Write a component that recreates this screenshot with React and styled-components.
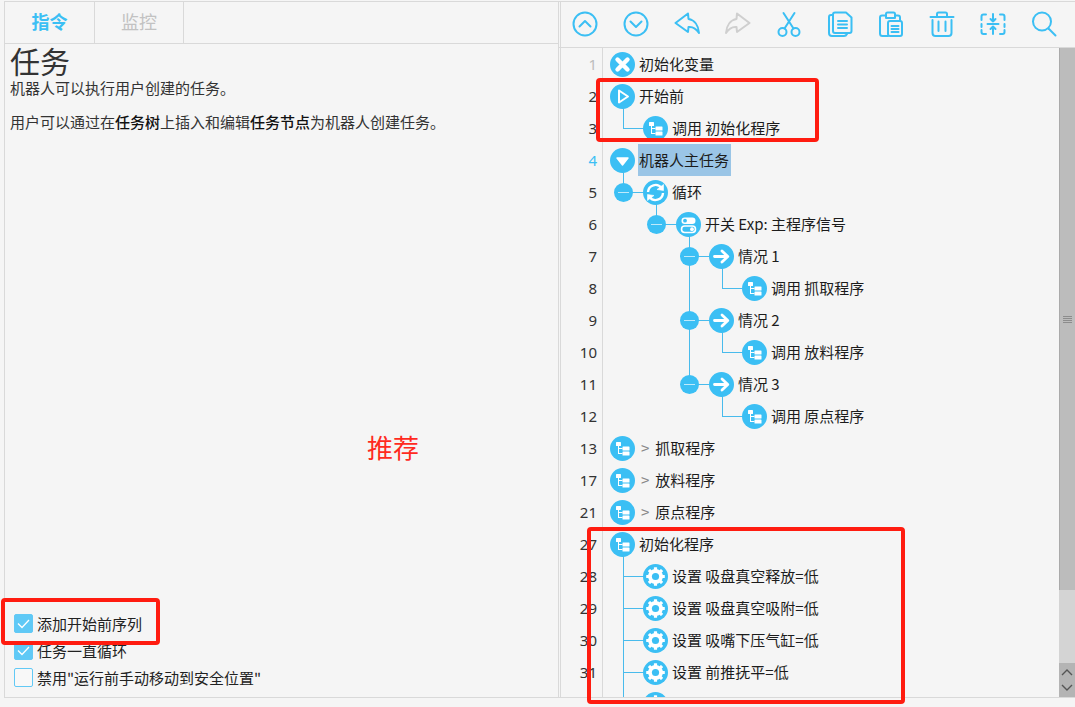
import styled, { createGlobalStyle } from "styled-components";

const BLUE = "#3bbff4";
const LINE = "#48bbec";
const FONT = `"Noto Sans CJK SC", "Noto Sans", sans-serif`;

const GlobalStyle = createGlobalStyle`
  html, body {
    margin: 0;
    background: #f5f5f5;
  }
  * {
    box-sizing: border-box;
  }
`;

const Page = styled.div`
  position: relative;
  width: 1075px;
  height: 707px;
  overflow: hidden;
  display: flex;
  flex-direction: column;
  padding-top: 1px;
  background: #f5f5f5;
  color: #262626;
  font-family: ${FONT};
`;

const Main = styled.div`
  flex: 0 0 697px;
  display: flex;
  border-top: 1px solid #d9d9d9;
  border-bottom: 1px solid #d9d9d9;
  margin-left: 4px;
  min-height: 0;
`;

const Footer = styled.div`
  flex: 1;
  overflow: hidden;
  padding: 5px 0 0 625px;
  color: ${BLUE};
  font-size: 14px;
  line-height: 20px;
  white-space: nowrap;
`;

/* left panel */
const LeftPanel = styled.section`
  position: relative;
  flex: 0 0 555px;
  display: flex;
  flex-direction: column;
  border-left: 1px solid #d9d9d9;
  border-right: 1px solid #d9d9d9;
`;

const Tabs = styled.div`
  flex: 0 0 42px;
  display: flex;
  border-bottom: 1px solid #d9d9d9;
`;

const Tab = styled.div`
  flex: 0 0 ${(props) => props.width}px;
  display: flex;
  align-items: center;
  justify-content: center;
  padding-bottom: 3px;
  border-right: 1px solid #d9d9d9;
  font-size: 18px;
  font-weight: ${(props) => (props.active ? 700 : 400)};
  color: ${(props) => (props.active ? BLUE : "#c2c2c2")};
`;

const Help = styled.div`
  flex: 1;
  padding: 0 0 0 5px;
`;

const Title = styled.h1`
  margin: 0 0 2px;
  font-size: 30px;
  font-weight: 400;
  line-height: 32px;
  color: #333;
`;

const Para = styled.p`
  margin: 0 0 14px;
  font-size: 15px;
  line-height: 20px;
  color: #333;

  b {
    font-weight: 500;
    color: #111;
  }
`;

const Recommend = styled.div`
  position: absolute;
  left: 362px;
  top: 427px;
  font-size: 26px;
  line-height: 36px;
  color: #ff2a1e;
`;

const Options = styled.div`
  display: flex;
  flex-direction: column;
  padding: 0 0 6px 9px;
`;

const Option = styled.label`
  height: 27px;
  display: flex;
  align-items: center;
  gap: 4px;
  font-size: 15px;
  color: #222;
`;

const Box = styled.span`
  flex: 0 0 19px;
  height: 19px;
  display: flex;
  align-items: center;
  justify-content: center;
  border: 1px solid #62c9f5;
  border-radius: 2px;
  background: ${(props) => (props.checked ? "#5fc9f6" : "#f8f8f8")};
`;

/* right panel */
const RightPanel = styled.section`
  flex: 1;
  display: flex;
  flex-direction: column;
  min-width: 0;
  margin-left: 1px;
  border-left: 1px solid #d9d9d9;
`;

const Toolbar = styled.div`
  flex: 0 0 46px;
  display: flex;
  align-items: center;
  margin-left: -2px;
  padding-bottom: 2px;
  border-bottom: 1px solid #d9d9d9;
`;

const ToolButton = styled.div`
  flex: 0 0 51px;
  display: flex;
  justify-content: center;
  color: ${(props) => (props.disabled ? "#cfcfcf" : BLUE)};

  svg {
    display: block;
    fill: none;
    stroke: currentColor;
    stroke-width: 2;
    stroke-linecap: round;
    stroke-linejoin: round;
  }
`;

const Editor = styled.div`
  flex: 1;
  display: flex;
  min-height: 0;
`;

const Tree = styled.div`
  flex: 1;
  overflow: hidden;
  min-width: 0;
`;

const Row = styled.div`
  height: 32px;
  display: flex;
`;

const LineNo = styled.div`
  flex: 0 0 42px;
  padding-right: 5px;
  border-right: 1px solid #d9d9d9;
  text-align: right;
  font-family: "Noto Sans", sans-serif;
  font-size: 15px;
  line-height: 32px;
  color: ${(props) => props.color || "#333"};
`;

const Node = styled.div`
  position: relative;
  flex: 1;
  display: flex;
  align-items: center;
  gap: 4px;
  padding-left: ${(props) => 7 + props.level * 33}px;
  font-size: 15px;
  color: #1c1c1c;
  white-space: nowrap;
`;

const NodeIcon = styled.svg`
  position: relative;
  flex: 0 0 25px;
  height: 25px;
`;

const Label = styled.span`
  line-height: 32px;
  background: ${(props) => (props.selected ? "#9ac5e6" : "transparent")};
  padding: 0 ${(props) => (props.selected ? "2px 0 1px" : "0")};
  margin-left: ${(props) => (props.selected ? "-1px" : "0")};
`;

const Fold = styled.span`
  margin: 0 6px 0 2px;
  color: #888;
`;

/* vertical part of a connector, hangs down from the row above */
const Pipe = styled.i`
  position: absolute;
  left: ${(props) => 20 + props.axis * 33}px;
  top: -4px;
  bottom: ${(props) => (props.through ? "0" : "50%")};
  width: 1px;
  background: ${LINE};
`;

/* horizontal part of a connector, from a pipe to the icon */
const Branch = styled.i`
  position: absolute;
  left: ${(props) => 20 + props.axis * 33}px;
  top: 50%;
  width: 21px;
  height: 1px;
  background: ${LINE};
`;

const Toggle = styled.i`
  position: absolute;
  left: ${(props) => 11 + props.axis * 33}px;
  top: 7px;
  width: 19px;
  height: 19px;
  border-radius: 50%;
  background: ${BLUE};

  &::after {
    content: "";
    position: absolute;
    left: 4px;
    right: 4px;
    top: 9px;
    height: 1px;
    background: #bfeafb;
  }
`;

const Scrollbar = styled.div`
  flex: 0 0 16px;
  display: flex;
  flex-direction: column;
  background: #d4d4d4;
`;

const Thumb = styled.div`
  flex: 0 0 542px;
  display: flex;
  flex-direction: column;
  justify-content: center;
  align-items: center;
  gap: 1px;
  background: #bcbcbc;
  border-left: 1px solid #aaa;

  i {
    width: 9px;
    height: 1px;
    background: #8c8c8c;
  }
`;

const ScrollArrows = styled.div`
  margin-top: auto;
  flex: 0 0 34px;
  background: #b4b4b4;

  svg {
    display: block;
    fill: none;
    stroke: #555;
    stroke-width: 1.4;
  }
`;

/* red annotations drawn over the screenshot */
const Mark = styled.div`
  position: absolute;
  left: ${(props) => props.x}px;
  top: ${(props) => props.y}px;
  width: ${(props) => props.w}px;
  height: ${(props) => props.h}px;
  border: 4px solid #ff1c10;
  border-radius: 4px;
`;

const glyphs = {
  stop: (
    <path d="M7.5 7.5 L17.5 17.5 M17.5 7.5 L7.5 17.5" stroke="#fff" strokeWidth="4.4" strokeLinecap="round" />
  ),
  start: (
    <path d="M9 6.5 L18 12.5 L9 18.5 Z" fill="none" stroke="#fff" strokeWidth="2" strokeLinejoin="round" />
  ),
  tree: (
    <g fill="#fff">
      <rect x="6" y="6" width="5" height="4" rx="0.6" />
      <rect x="12.5" y="10.5" width="7" height="4" rx="0.6" />
      <rect x="12.5" y="15.5" width="7" height="4" rx="0.6" />
      <path d="M8 10 h1 v2 h3.5 v1 h-3.5 v4 h3.5 v1 h-4.5 Z" />
    </g>
  ),
  open: <path d="M7 10 H18 L12.5 17 Z" fill="#fff" stroke="#fff" strokeWidth="1.4" strokeLinejoin="round" />,
  loop: (
    <g fill="none" stroke="#fff" strokeWidth="2.4">
      <path d="M5 12 A7.5 7.5 0 0 1 18.5 8" />
      <path d="M20 13 A7.5 7.5 0 0 1 6.5 17" />
      <path d="M14 9.5 L20.5 10.5 L20.5 4.5 Z" fill="#fff" strokeWidth="0.6" />
      <path d="M11 15.5 L4.5 14.5 L4.5 20.5 Z" fill="#fff" strokeWidth="0.6" />
    </g>
  ),
  switch: (
    <g>
      <rect x="5.5" y="5.5" width="14" height="6.5" rx="3.2" fill="#fff" />
      <circle cx="9" cy="8.7" r="1.9" fill={BLUE} />
      <rect x="5.5" y="14" width="14" height="6.5" rx="3.2" fill="none" stroke="#fff" strokeWidth="1.6" />
      <circle cx="16" cy="17.2" r="1.9" fill="#fff" />
    </g>
  ),
  arrow: (
    <path
      d="M5.5 12.5 H18.5 M13 7 L18.8 12.5 L13 18"
      fill="none"
      stroke="#fff"
      strokeWidth="2.8"
      strokeLinecap="round"
      strokeLinejoin="round"
    />
  ),
  gear: (
    <g>
      <circle cx="12.5" cy="12.5" r="7.4" fill="#fff" />
      {[0, 45, 90, 135, 180, 225, 270, 315].map((deg) => (
        <rect key={deg} x="10.9" y="3.2" width="3.2" height="4" rx="0.5" fill="#fff" transform={`rotate(${deg} 12.5 12.5)`} />
      ))}
      <circle cx="12.5" cy="12.5" r="3.6" fill={BLUE} />
    </g>
  ),
};

const rows = [
  { n: 1, level: 0, icon: "stop", text: "初始化变量", color: "#bdbdbd" },
  { n: 2, level: 0, icon: "start", text: "开始前" },
  { n: 3, level: 1, icon: "tree", text: "调用 初始化程序", elbow: 0 },
  { n: 4, level: 0, icon: "open", text: "机器人主任务", color: BLUE, selected: true },
  { n: 5, level: 1, icon: "loop", text: "循环", toggle: 0 },
  { n: 6, level: 2, icon: "switch", text: "开关 Exp: 主程序信号", toggle: 1 },
  { n: 7, level: 3, icon: "arrow", text: "情况 1", toggle: 2, through: 2 },
  { n: 8, level: 4, icon: "tree", text: "调用 抓取程序", elbow: 3, through: 2 },
  { n: 9, level: 3, icon: "arrow", text: "情况 2", toggle: 2, through: 2 },
  { n: 10, level: 4, icon: "tree", text: "调用 放料程序", elbow: 3, through: 2 },
  { n: 11, level: 3, icon: "arrow", text: "情况 3", toggle: 2 },
  { n: 12, level: 4, icon: "tree", text: "调用 原点程序", elbow: 3 },
  { n: 13, level: 0, icon: "tree", text: "抓取程序", folded: true },
  { n: 17, level: 0, icon: "tree", text: "放料程序", folded: true },
  { n: 21, level: 0, icon: "tree", text: "原点程序", folded: true },
  { n: 27, level: 0, icon: "tree", text: "初始化程序" },
  { n: 28, level: 1, icon: "gear", text: "设置 吸盘真空释放=低", elbow: 0, through: 0 },
  { n: 29, level: 1, icon: "gear", text: "设置 吸盘真空吸附=低", elbow: 0, through: 0 },
  { n: 30, level: 1, icon: "gear", text: "设置 吸嘴下压气缸=低", elbow: 0, through: 0 },
  { n: 31, level: 1, icon: "gear", text: "设置 前推抚平=低", elbow: 0, through: 0 },
  { n: 32, level: 1, icon: "gear", text: "设置 等待=低", elbow: 0, through: 0 },
];

function TreeRow({ row }) {
  const { n, level, icon, text, color, selected, folded, elbow, toggle, through } = row;
  const axis = elbow ?? toggle;
  return (
    <Row>
      <LineNo color={color}>{n}</LineNo>
      <Node level={level}>
        {through !== undefined && through !== axis && <Pipe axis={through} through />}
        {axis !== undefined && <Pipe axis={axis} through={through === axis} />}
        {axis !== undefined && <Branch axis={axis} />}
        {toggle !== undefined && <Toggle axis={toggle} />}
        <NodeIcon viewBox="0 0 25 25">
          <circle cx="12.5" cy="12.5" r="12.5" fill={BLUE} />
          {glyphs[icon]}
        </NodeIcon>
        <Label selected={selected}>
          {folded && <Fold>&gt;</Fold>}
          {text}
        </Label>
      </Node>
    </Row>
  );
}

const tools = [
  {
    key: "up",
    draw: (
      <>
        <circle cx="13" cy="13" r="11.5" />
        <path d="M7.5 15.5 L13 10 L18.5 15.5" />
      </>
    ),
  },
  {
    key: "down",
    draw: (
      <>
        <circle cx="13" cy="13" r="11.5" />
        <path d="M7.5 10.5 L13 16 L18.5 10.5" />
      </>
    ),
  },
  {
    key: "undo",
    draw: <path d="M14 2.5 L1.5 12 L14 21 L14.5 16 C19 15.5 22.5 18 25 22 C24.5 14.5 20.5 9 14.5 8 Z" />,
  },
  {
    key: "redo",
    disabled: true,
    draw: <path d="M12 2.5 L24.5 12 L12 21 L11.5 16 C7 15.5 3.5 18 1 22 C1.5 14.5 5.5 9 11.5 8 Z" />,
  },
  {
    key: "cut",
    draw: (
      <>
        <circle cx="6.5" cy="21" r="4" />
        <circle cx="19.5" cy="21" r="4" />
        <path d="M8.5 17.5 L18.5 2 M17.5 17.5 L7.5 2" />
      </>
    ),
  },
  {
    key: "copy",
    draw: (
      <>
        <path d="M6 4 H4 Q2 4 2 6 V22 Q2 25 5 25 H17 Q19 25 20 23" />
        <path d="M8 1.5 H19 L24.5 6.5 V20 Q24.5 22 22.5 22 H8 Q6 22 6 20 V3.5 Q6 1.5 8 1.5 Z" />
        <path d="M11 10 H20 M11 13.5 H20 M11 17 H20" />
      </>
    ),
  },
  {
    key: "paste",
    draw: (
      <>
        <path d="M8 4.5 H4 Q2 4.5 2 6.5 V22.5 Q2 25 4.5 25 H10" />
        <path d="M8 7 V3 Q8 1.5 9.5 1.5 H15.5 Q17 1.5 17 3 V7 Z" />
        <path d="M17 4.5 H20 Q22 4.5 22 6.5 V9" />
        <rect x="10" y="10" width="14" height="15" rx="2" />
        <path d="M13.5 15 H20.5 M13.5 18 H20.5 M13.5 21 H20.5" />
      </>
    ),
  },
  {
    key: "delete",
    draw: (
      <>
        <path d="M1.5 6 H24.5 M8 6 V3 Q8 1.5 9.5 1.5 H16.5 Q18 1.5 18 3 V6" />
        <path d="M3.5 9 V22 Q3.5 25 6.5 25 H19.5 Q22.5 25 22.5 22 V9" />
        <path d="M9.5 10.5 V20 M16.5 10.5 V20" />
      </>
    ),
  },
  {
    key: "fold",
    draw: (
      <>
        <path d="M6 3.5 H3.5 Q1.5 3.5 1.5 5.5 V9 M1.5 13 V16 M1.5 19 V21 Q1.5 23 3.5 23 H6" />
        <path d="M20 3.5 H22.5 Q24.5 3.5 24.5 5.5 V9 M24.5 13 V16 M24.5 19 V21 Q24.5 23 22.5 23 H20" />
        <path d="M7.5 13 H18.5 M13 3 V10.5 M10.5 8 L13 10.5 L15.5 8 M13 23 V15.5 M10.5 18 L13 15.5 L15.5 18" />
      </>
    ),
  },
  {
    key: "search",
    draw: (
      <>
        <circle cx="11" cy="10.5" r="9" />
        <path d="M17.5 17.5 L24.5 24.5" />
      </>
    ),
  },
];

export default function App() {
  return (
    <Page>
      <GlobalStyle />
      <Main>
        <LeftPanel>
          <Tabs>
            <Tab width={90} active>
              指令
            </Tab>
            <Tab width={89}>监控</Tab>
          </Tabs>
          <Help>
            <Title>任务</Title>
            <Para>机器人可以执行用户创建的任务。</Para>
            <Para>
              用户可以通过在<b>任务树</b>上插入和编辑<b>任务节点</b>为机器人创建任务。
            </Para>
          </Help>
          <Recommend>推荐</Recommend>
          <Options>
            <Option>
              <Box checked>
                <svg width="13" height="13" viewBox="0 0 13 13" fill="none" stroke="#fff" strokeWidth="1.3">
                  <path d="M1 6.5 L5 10.5 L12 3" />
                </svg>
              </Box>
              添加开始前序列
            </Option>
            <Option>
              <Box checked>
                <svg width="13" height="13" viewBox="0 0 13 13" fill="none" stroke="#fff" strokeWidth="1.3">
                  <path d="M1 6.5 L5 10.5 L12 3" />
                </svg>
              </Box>
              任务一直循环
            </Option>
            <Option>
              <Box />
              禁用"运行前手动移动到安全位置"
            </Option>
          </Options>
        </LeftPanel>
        <RightPanel>
          <Toolbar>
            {tools.map((tool) => (
              <ToolButton key={tool.key} disabled={tool.disabled}>
                <svg width="26" height="26" viewBox="0 0 26 26">
                  {tool.draw}
                </svg>
              </ToolButton>
            ))}
          </Toolbar>
          <Editor>
            <Tree>
              {rows.map((row) => (
                <TreeRow key={row.n} row={row} />
              ))}
            </Tree>
            <Scrollbar>
              <Thumb>
                <i />
                <i />
                <i />
                <i />
              </Thumb>
              <ScrollArrows>
                <svg width="16" height="34" viewBox="0 0 16 34">
                  <path d="M3 12 L8 7 L13 12 M3 22 L8 27 L13 22" />
                </svg>
              </ScrollArrows>
            </Scrollbar>
          </Editor>
        </RightPanel>
      </Main>
      <Footer>调用 初始化程序 设置 吸盘真空释放 吸嘴下压气缸 前推抚平 原点程序</Footer>
      <Mark x={596} y={78} w={223} h={64} />
      <Mark x={587} y={527} w={318} h={177} />
      <Mark x={1} y={598} w={159} h={47} />
    </Page>
  );
}
